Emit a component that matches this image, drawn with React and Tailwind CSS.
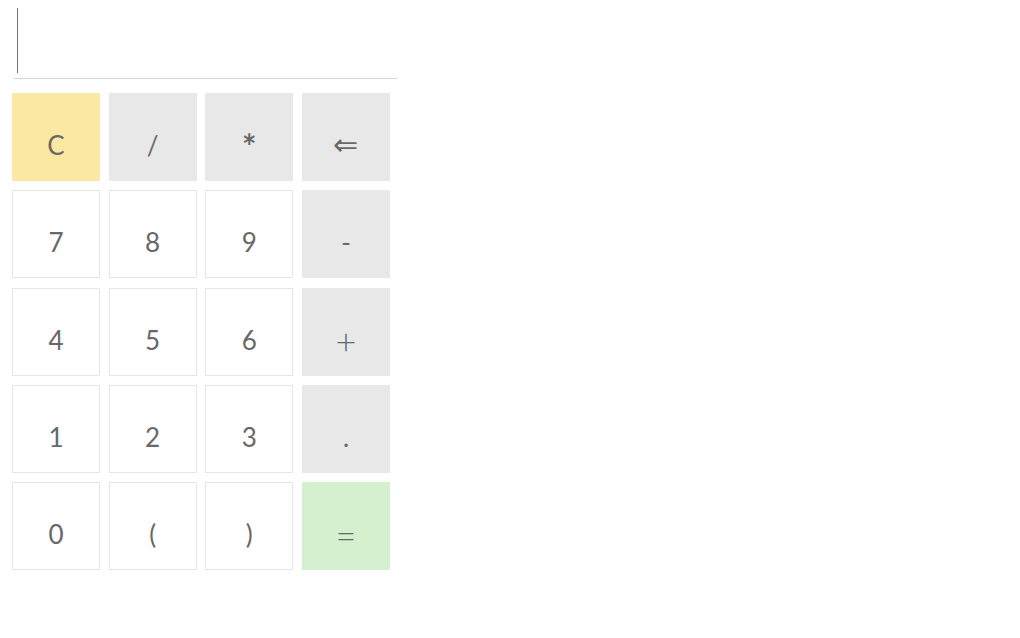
const keys = [
  { label: "C", tone: "yellow" },
  { label: "/", tone: "gray" },
  { label: "*", tone: "gray", extra: "text-[34px] font-bold pt-[18px]" },
  { label: "⇐", tone: "gray", extra: "text-[30px] pt-[12px]" },
  { label: "7" },
  { label: "8" },
  { label: "9" },
  { label: "-", tone: "gray" },
  { label: "4" },
  { label: "5" },
  { label: "6" },
  { label: "+", tone: "gray", extra: "text-[36px] font-light pt-[18px]" },
  { label: "1" },
  { label: "2" },
  { label: "3" },
  { label: ".", tone: "gray" },
  { label: "0" },
  { label: "(" },
  { label: ")" },
  { label: "=", tone: "green", extra: "text-[36px] font-light pt-[18px]" },
];

const toneClasses = {
  yellow: "bg-[#fbe8a3] border-[#fbe8a3]",
  gray: "bg-[#e8e8e8] border-[#e8e8e8]",
  green: "bg-[#d5f0cf] border-[#d5f0cf]",
  white: "bg-white border-[#e6e6e6]",
};

function Key({ label, tone = "white", extra = "text-[26px] pt-[16px]" }) {
  return (
    <button
      className={`flex h-[88px] w-[88px] items-center justify-center border leading-none text-[#686868] ${toneClasses[tone]} ${extra}`}
    >
      {label}
    </button>
  );
}

export default function App() {
  return (
    <div className="min-h-screen bg-white font-['Lato','Liberation_Sans',sans-serif]">
      <div className="w-[397px] pl-[14px]">
        <div className="flex h-[79px] items-start border-b border-[#d4d4d4] pl-[3px] pt-[8px]">
          <div className="h-[65px] w-px bg-[#777]" />
        </div>
      </div>
      <div className="grid w-fit grid-cols-[repeat(4,88px)] gap-x-[8.67px] gap-y-[9.25px] pl-[12px] pt-[14px]">
        {keys.map((k) => (
          <Key key={k.label} label={k.label} tone={k.tone} extra={k.extra} />
        ))}
      </div>
    </div>
  );
}
